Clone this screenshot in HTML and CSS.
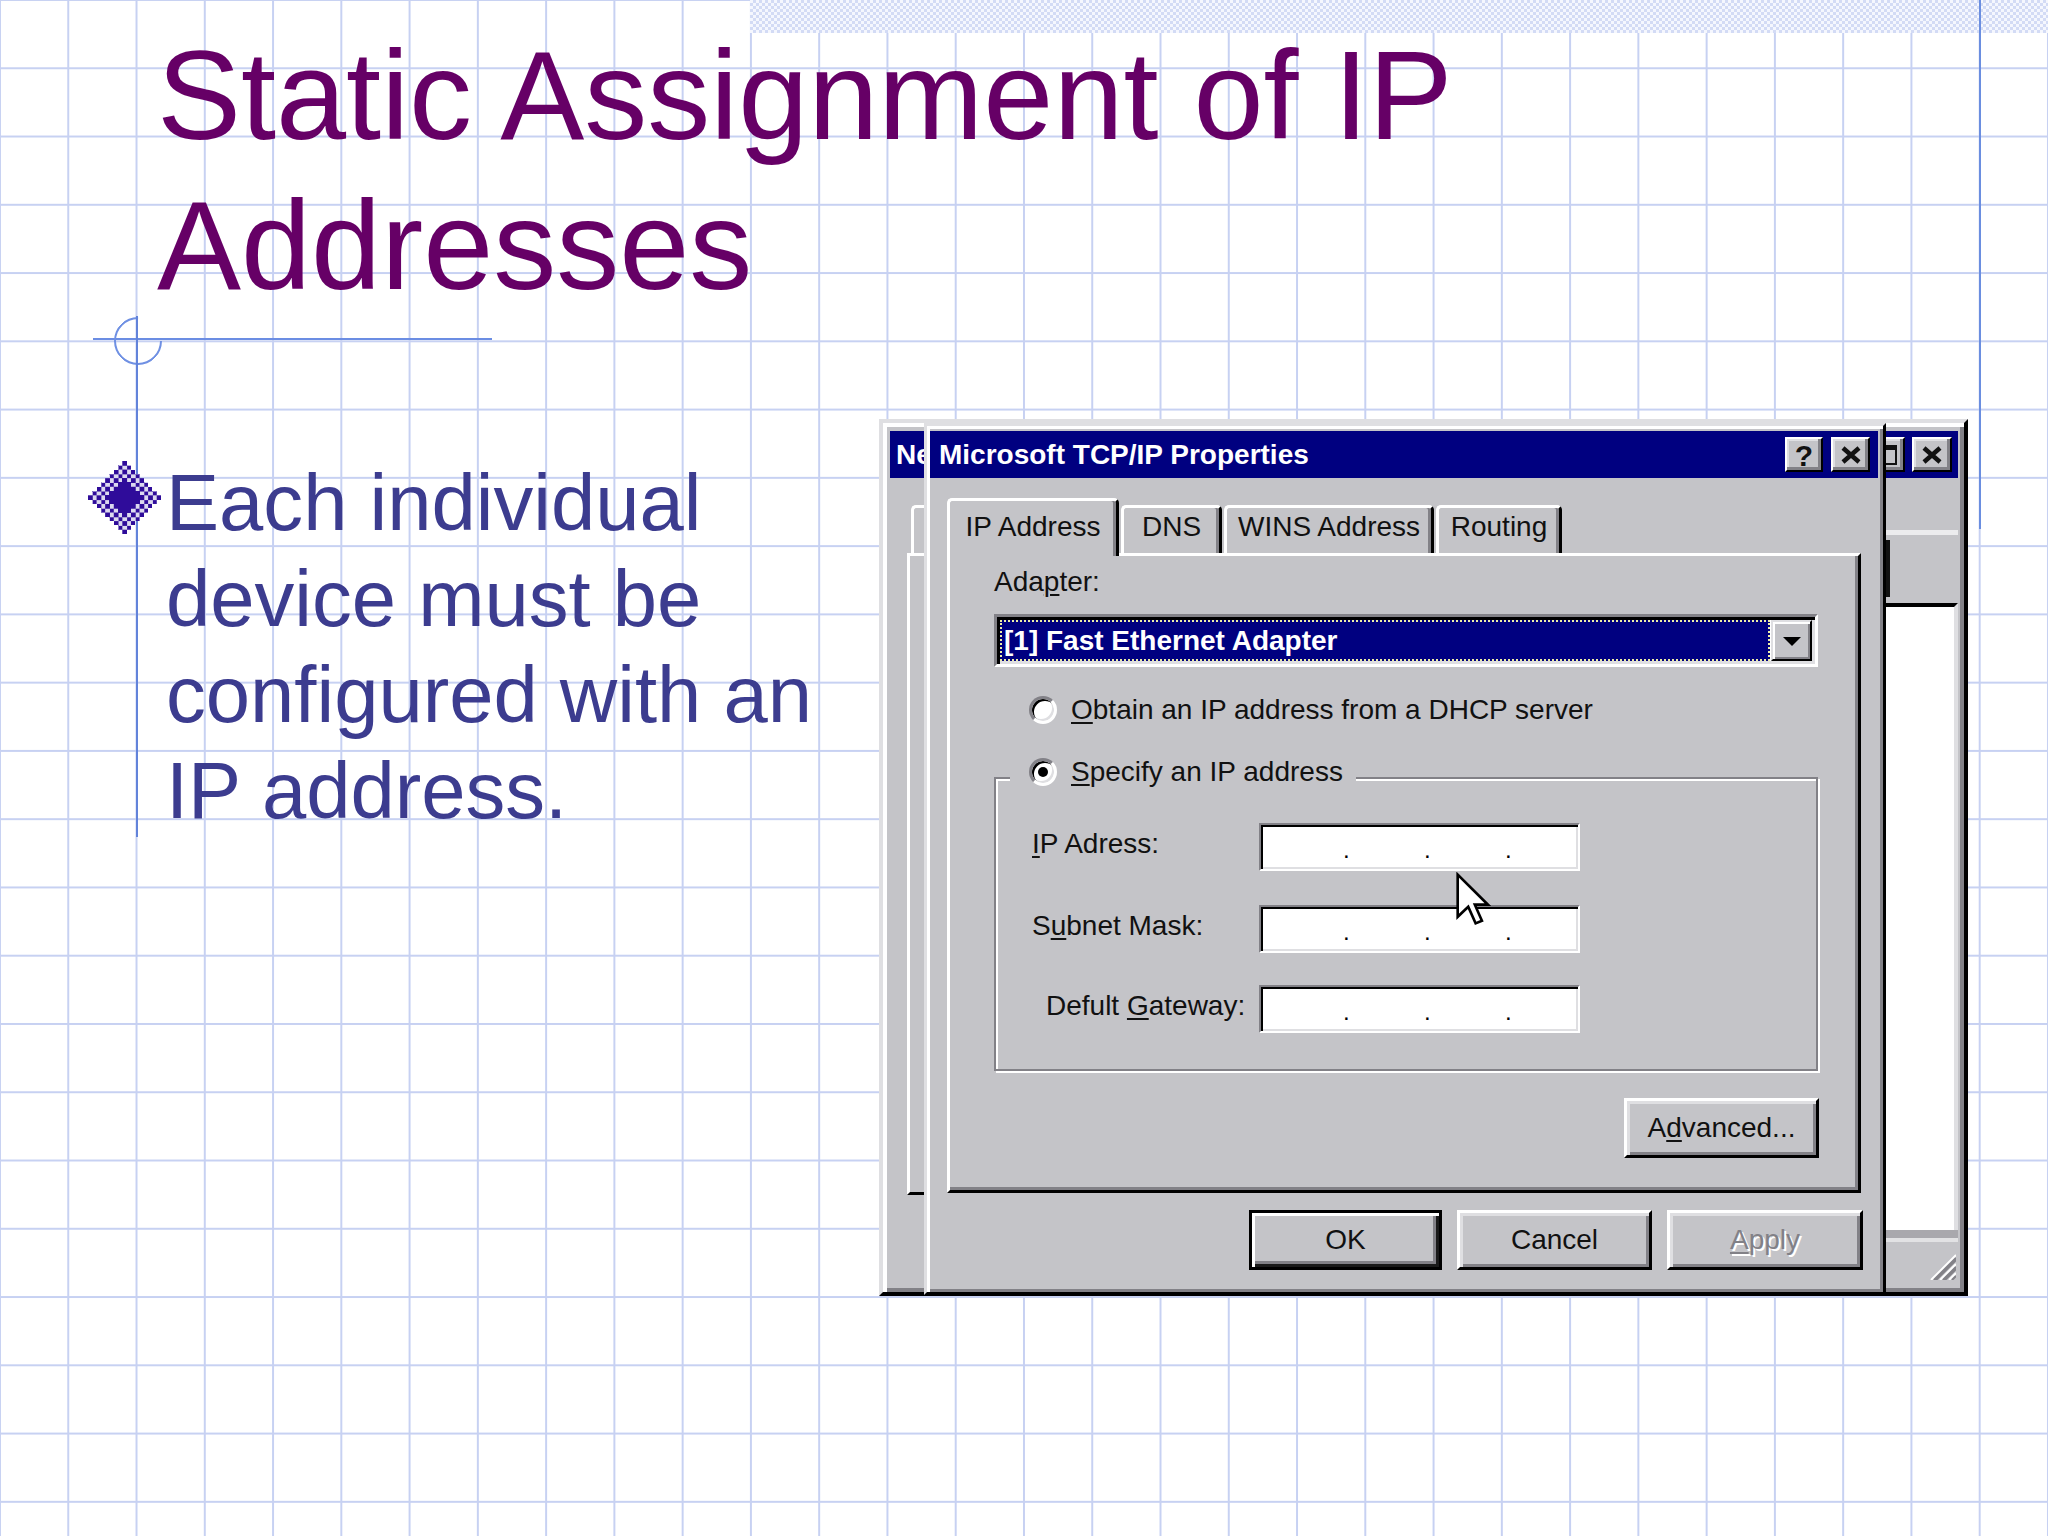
FILE: index.html
```html
<!DOCTYPE html>
<html lang="en">
<head>
<meta charset="utf-8">
<title>Static Assignment of IP Addresses</title>
<link rel="stylesheet" href="styles.css">
</head>
<body>
<div class="slide">
  <div class="band"></div>
  <h1 class="title">Static Assignment of IP Addresses</h1>
  <div class="rule"></div>
  <div class="content">
    <ul class="bullets">
      <li>
        <span class="diamond">
          <svg width="73" height="73" viewBox="0 0 17 17" shape-rendering="crispEdges">
            <defs>
              <pattern id="ck" width="2" height="2" patternUnits="userSpaceOnUse">
                <rect width="2" height="2" fill="#dcd9ef"/>
                <rect width="1" height="1" fill="#2f0c9a"/>
                <rect x="1" y="1" width="1" height="1" fill="#2f0c9a"/>
              </pattern>
            </defs>
            <path fill="url(#ck)" d="M8,0 h1 v1 h1 v1 h1 v1 h1 v1 h1 v1 h1 v1 h1 v1 h1 v1 h1 v1 h-1 v1 h-1 v1 h-1 v1 h-1 v1 h-1 v1 h-1 v1 h-1 v1 h-1 v1 h-1 v-1 h-1 v-1 h-1 v-1 h-1 v-1 h-1 v-1 h-1 v-1 h-1 v-1 h-1 v-1 h-1 v-1 h1 v-1 h1 v-1 h1 v-1 h1 v-1 h1 v-1 h1 v-1 h1 v-1 h1 z"/>
            <path fill="#2f0c9a" d="M8,4 h1 v1 h1 v1 h1 v1 h1 v1 h1 v1 h-1 v1 h-1 v1 h-1 v1 h-1 v1 h-1 v-1 h-1 v-1 h-1 v-1 h-1 v-1 h-1 v-1 h1 v-1 h1 v-1 h1 v-1 h1 z"/>
          </svg>
        </span>
        <span class="btext">Each individual device must be configured with an IP address.</span>
      </li>
    </ul>

    <div class="shot">
      <div class="backwin">
        <div class="btitle">
          <span class="bname">Ne</span>
          <span class="cbtn bmin"><i class="gmin"></i></span>
          <span class="cbtn bmax"><i class="gmax"></i></span>
          <span class="cbtn bclose"><svg width="22" height="18" viewBox="0 0 22 18"><path d="M3 2 L19 16 M19 2 L3 16" stroke="#111" stroke-width="4.5"/></svg></span>
        </div>
        <div class="bbody">
          <div class="bcolA">
            <div class="ba-tab"></div>
            <div class="ba-panel"></div>
          </div>
          <div class="bcolB"></div>
          <div class="bcolC">
            <div class="bc-top"></div>
            <div class="bc-line"></div>
            <div class="bc-mid"><div class="bc-bar"></div></div>
            <div class="bc-list"></div>
            <div class="bc-sep"></div>
            <div class="bc-grip">
              <svg width="28" height="30" viewBox="0 0 28 30">
                <path d="M28 5 L3 30 M28 14 L12 30 M28 23 L21 30" stroke="#ffffff" stroke-width="2"/>
                <path d="M28 8 L6 30 M28 10 L8 30 M28 17 L15 30 M28 19 L17 30 M28 26 L24 30" stroke="#828187" stroke-width="2"/>
              </svg>
            </div>
          </div>
        </div>
      </div>

      <div class="dlg">
        <div class="tb">
          <span class="tbtext">Microsoft TCP/IP Properties</span>
          <span class="cbtn q">?</span>
          <span class="cbtn x"><svg width="22" height="18" viewBox="0 0 22 18"><path d="M3 2 L19 16 M19 2 L3 16" stroke="#111" stroke-width="4.5"/></svg></span>
        </div>
        <div class="dbody">
          <div class="tabs">
            <div class="tab sel t1">IP Address</div>
            <div class="tab t2">DNS</div>
            <div class="tab t3">WINS Address</div>
            <div class="tab t4">Routing</div>
          </div>
          <div class="panel">
            <div class="lbl">Ada<u>p</u>ter:</div>
            <div class="combo">
              <div class="csel">[1] Fast Ethernet Adapter</div>
              <div class="cdd"><i class="tri"></i></div>
            </div>
            <div class="opt">
              <span class="radio"></span>
              <span><u>O</u>btain an IP address from a DHCP server</span>
            </div>
            <div class="group">
              <div class="legend">
                <span class="radio on"></span>
                <span><u>S</u>pecify an IP address</span>
              </div>
              <div class="frow r1">
                <span class="flabel"><u>I</u>P Adress:</span>
                <span class="field"><span>.</span><span>.</span><span>.</span></span>
              </div>
              <div class="frow r2">
                <span class="flabel">S<u>u</u>bnet Mask:</span>
                <span class="field"><span>.</span><span>.</span><span>.</span></span>
              </div>
              <div class="frow r3">
                <span class="flabel gw">Defult <u>G</u>ateway:</span>
                <span class="field"><span>.</span><span>.</span><span>.</span></span>
              </div>
            </div>
            <div class="btn adv">A<u>d</u>vanced...</div>
          </div>
          <div class="brow">
            <div class="btn def ok">OK</div>
            <div class="btn cancel">Cancel</div>
            <div class="btn dis apply"><u>A</u>pply</div>
          </div>
        </div>
      </div>

      <svg class="cursor" width="37" height="58" viewBox="-1 -1 14 22">
        <path d="M0,0 V16 L4,12.2 L6.8,18.5 L9.2,17.5 L6.5,11.4 H11.5 Z" fill="#fff" stroke="#000" stroke-width="1" stroke-linejoin="miter"/>
      </svg>
    </div>
  </div>
</div>
</body>
</html>
```

FILE: styles.css
```css
* { box-sizing: border-box; }

body {
  margin: 0;
  width: 2048px;
  height: 1536px;
  overflow: hidden;
  background-color: #ffffff;
  background-image:
    linear-gradient(90deg, #c7d1f2 2px, transparent 2px),
    linear-gradient(180deg, #c7d1f2 2px, transparent 2px);
  background-size: 68.2667px 68.2667px;
  background-position: -1px -1px;
  font-family: "Liberation Sans", Arial, sans-serif;
}

.slide {
  position: relative;
  width: 2048px;
  height: 1536px;
}
/* template decoration: thin vertical rule at the top right */
.slide::after {
  content: "";
  position: absolute;
  left: 1979px;
  top: 0;
  width: 2px;
  height: 529px;
  background: #6a8ee0;
}

.band {
  margin-left: 750px;
  height: 33px;
  background: repeating-conic-gradient(#d3dbf5 0 25%, #f5f7fe 0 50%) 0 0 / 6px 6px;
}

.title {
  margin: -12px 0 0;
  padding-left: 157px;
  width: 1500px;
  font-family: "Liberation Sans", Arial, sans-serif;
  font-weight: normal;
  font-size: 126px;
  line-height: 150px;
  color: #660066;
}

.rule {
  position: relative;
  margin: 17px 0 0 93px;
  width: 399px;
  height: 2px;
  background: #6b8de3;
}
.rule::before {
  content: "";
  position: absolute;
  left: 21px;
  top: -21px;
  width: 44px;
  height: 44px;
  border: 2px solid #6f90e3;
  border-top-color: transparent;
  border-radius: 50%;
  transform: rotate(45deg);
}

.content {
  display: flex;
  align-items: flex-start;
  padding-left: 88px;
}

.bullets {
  position: relative;
  list-style: none;
  margin: 0;
  padding: 114.6px 0 0;
  flex: 0 0 791px;
}
.bullets::before {
  content: "";
  position: absolute;
  left: 48px;
  top: -24px;
  width: 2px;
  height: 521px;
  background: #6283da;
}
.bullets li {
  display: flex;
  align-items: flex-start;
}
.diamond {
  position: relative;
  flex: 0 0 73px;
  height: 73px;
  margin-top: 6px;
  margin-right: 5px;
}
.diamond svg { display: block; }
.btext {
  width: 680px;
  font-size: 79.6px;
  line-height: 96px;
  color: #3c3c8f;
}

/* ---------- screenshot ---------- */
.shot {
  position: relative;
  flex: none;
  margin-top: 79px;
  width: 1089px;
  height: 877px;
  font-size: 28px;
  line-height: 32px;
  color: #111;
}

.backwin {
  width: 1089px;
  height: 877px;
  background: #c4c4c8;
  border: 4px solid;
  border-color: #dfdfe2 #000 #000 #dfdfe2;
  box-shadow: inset 4px 4px #fff, inset -4px -4px #828187;
  padding: 8px 6px 3px 7px;
  display: flex;
  flex-direction: column;
}

.btitle {
  height: 47px;
  flex: none;
  background: #000080;
  display: flex;
  align-items: center;
  padding: 0 6px;
  color: #fff;
  font-weight: bold;
}
.bname {
  white-space: nowrap;
  margin-right: auto;
}

.cbtn {
  height: 35px;
  background: #c4c4c8;
  border: 2px solid;
  border-color: #fff #000 #000 #fff;
  box-shadow: inset -3px -3px #828187, inset 2px 2px #dfdfe2;
  display: flex;
  align-items: center;
  justify-content: center;
  color: #111;
}
.bmin { width: 39px; }
.bmax { width: 39px; }
.bclose { width: 40px; margin-left: 7px; }
.gmin {
  display: block;
  width: 16px;
  height: 5px;
  background: #111;
  margin-top: 14px;
}
.gmax {
  display: block;
  width: 22px;
  height: 20px;
  border: 2px solid #111;
  border-top-width: 5px;
  margin-left: 1px;
}

.bbody {
  flex: 1;
  display: grid;
  grid-template-columns: 34px 1fr 72px;
}
.ba-tab {
  margin-left: 21px;
  margin-top: 27px;
  height: 48px;
  border-left: 3px solid #fff;
  border-top: 3px solid #fff;
  border-top-left-radius: 5px;
}
.ba-panel {
  margin-left: 17px;
  height: 642px;
  border-left: 3px solid #fff;
  border-top: 3px solid #fff;
  border-bottom: 3px solid #000;
}
.bcolC {
  display: flex;
  flex-direction: column;
}
.bc-top { height: 52px; }
.bc-line { height: 5px; background: #ececee; }
.bc-mid { height: 68px; padding-top: 5px; }
.bc-bar { width: 4px; height: 57px; background: #111; }
.bc-list {
  height: 627px;
  background: #fff;
  border-top: 4px solid #000;
  border-right: 4px solid #dfdfe2;
}
.bc-sep {
  height: 12px;
  background: linear-gradient(180deg, #a9a8ad 0 8px, #e2e2e4 8px 12px);
}
.bc-grip {
  flex: 1;
  display: flex;
  justify-content: flex-end;
  padding: 8px 2px 0 0;
}
.bc-grip svg { display: block; }

/* front dialog */
.dlg {
  position: absolute;
  left: 45px;
  top: 4px;
  z-index: 2;
  width: 962px;
  height: 872px;
  background: #c4c4c8;
  border: 3px solid;
  border-color: #dfdfe2 #000 #000 #dfdfe2;
  box-shadow: inset 3px 3px #fff, inset -3px -3px #828187;
  padding: 5px 5px 0 3px;
}

.tb {
  height: 47px;
  background: #000080;
  display: flex;
  align-items: center;
  padding: 0 8px 0 9px;
  color: #fff;
  font-weight: bold;
  line-height: 47px;
}
.tbtext { margin-right: auto; }
.cbtn.q {
  width: 38px;
  font-size: 30px;
  line-height: 1;
  font-weight: bold;
  padding-top: 2px;
}
.cbtn.x { width: 39px; margin-left: 8px; }

.dbody { padding: 20px 0 0 17px; }

.tabs {
  display: flex;
  align-items: flex-end;
  gap: 2px;
  height: 55px;
}
.tab {
  height: 48px;
  border: 3px solid #fff;
  border-bottom: 0;
  border-right-color: #000;
  border-radius: 5px 5px 0 0;
  box-shadow: inset -3px 0 #828187;
  background: #c4c4c8;
  text-align: center;
  padding-top: 3px;
}
.tab.sel {
  position: relative;
  z-index: 1;
  height: 58px;
  margin-bottom: -3px;
  padding-top: 10px;
}
.t1 { width: 172px; }
.t2 { width: 101px; }
.t3 { width: 210px; }
.t4 { width: 126px; }

.panel {
  width: 914px;
  height: 640px;
  border: 3px solid;
  border-color: #fff #000 #000 #fff;
  box-shadow: inset -3px -3px #828187;
  padding: 10px 39px 0 44px;
  display: flex;
  flex-direction: column;
  align-items: flex-start;
}

u {
  text-decoration-thickness: 2px;
  text-underline-offset: 3px;
}

.lbl { height: 32px; }

.combo {
  margin-top: 16px;
  width: 824px;
  height: 53px;
  border: 3px solid;
  border-color: #828187 #fff #fff #828187;
  box-shadow: inset 3px 3px #000, inset -3px -3px #dfdfe2;
  padding: 3px;
  display: flex;
  background: #fff;
}
.csel {
  width: 770px;
  height: 41px;
  background: #000080;
  border: 2px dotted #eeeea8;
  color: #fff;
  font-weight: bold;
  line-height: 37px;
  padding-left: 2px;
}
.cdd {
  width: 41px;
  height: 41px;
  margin-left: 1px;
  background: #c4c4c8;
  border: 2px solid;
  border-color: #dfdfe2 #000 #000 #dfdfe2;
  box-shadow: inset 2px 2px #fff, inset -2px -2px #828187;
  display: flex;
  align-items: center;
  justify-content: center;
}
.tri {
  display: block;
  width: 0;
  height: 0;
  border-left: 9px solid transparent;
  border-right: 9px solid transparent;
  border-top: 9px solid #000;
  margin-top: 2px;
}

.opt {
  margin-top: 27px;
  height: 32px;
  display: flex;
  align-items: center;
  gap: 14px;
  padding-left: 35px;
}

.radio {
  position: relative;
  flex: none;
  width: 28px;
  height: 28px;
  border-radius: 50%;
  background: #fff;
  border: 3px solid;
  border-color: #828187 #fff #fff #828187;
  box-shadow: inset 2px 2px #000, inset -2px -2px #dfdfe2;
}
.radio.on::after {
  content: "";
  position: absolute;
  left: 6px;
  top: 6px;
  width: 10px;
  height: 10px;
  border-radius: 50%;
  background: #000;
}

.group {
  margin-top: 51px;
  width: 824px;
  height: 294px;
  border: 2px solid #828187;
  box-shadow: inset 2px 2px #fff, 2px 2px #fff;
  display: flex;
  flex-direction: column;
  align-items: flex-start;
}
.legend {
  margin: -23px 0 0 14px;
  height: 32px;
  padding: 0 13px 0 19px;
  background: #c4c4c8;
  display: flex;
  align-items: center;
  gap: 14px;
}
.frow {
  display: flex;
  height: 48px;
}
.r1 { margin-top: 35px; }
.r2 { margin-top: 34px; }
.r3 { margin-top: 32px; }
.flabel {
  width: 263px;
  padding-left: 36px;
  margin-top: 5px;
  line-height: 32px;
  white-space: nowrap;
}
.flabel.gw { padding-left: 50px; }
.field {
  width: 321px;
  height: 48px;
  background: #fff;
  border: 2px solid;
  border-color: #828187 #fff #fff #828187;
  box-shadow: inset 2px 2px #000, inset -2px -2px #dfdfe2;
  display: flex;
  gap: 74.3px;
  padding: 7px 0 0 82px;
  font-size: 24px;
  line-height: 36px;
  color: #000;
}

.btn {
  height: 60px;
  background: #c4c4c8;
  border: 3px solid;
  border-color: #fff #000 #000 #fff;
  box-shadow: inset 3px 3px #dfdfe2, inset -3px -3px #828187;
  display: flex;
  align-items: center;
  justify-content: center;
  color: #111;
}
.adv {
  align-self: flex-end;
  margin-top: 27px;
  width: 195px;
}
.brow {
  display: flex;
  justify-content: flex-end;
  gap: 15px;
  margin-top: 17px;
  padding-right: 15px;
}
.ok { width: 193px; }
.cancel { width: 195px; }
.apply { width: 196px; }
.btn.def {
  border-color: #000;
  box-shadow: inset 3px 3px #fff, inset -3px -3px #1a1a1a, inset -6px -6px #828187;
}
.btn.dis {
  color: #828187;
  text-shadow: 2px 2px 0 #fff;
}

.cursor {
  position: absolute;
  left: 576px;
  top: 453px;
  z-index: 3;
}
```
